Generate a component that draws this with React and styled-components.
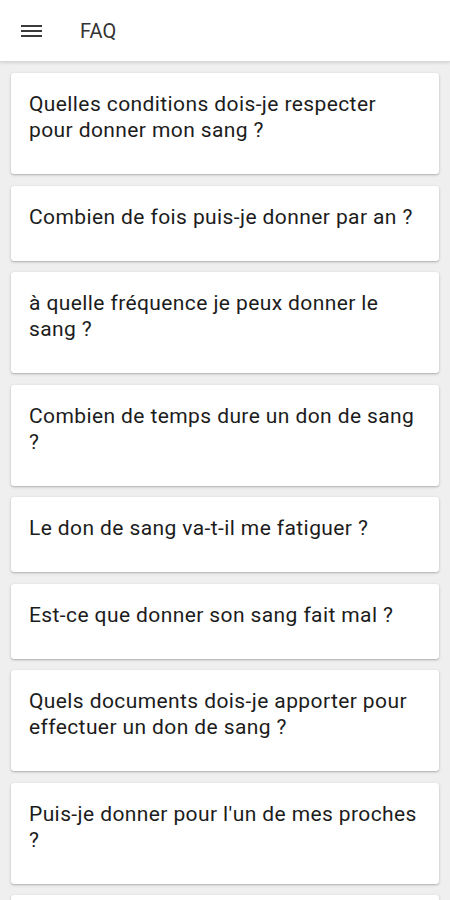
import React from "react";
import styled, { createGlobalStyle } from "styled-components";

const Global = createGlobalStyle`
  html, body { margin: 0; padding: 0; }
  body {
    background: #eeeeee;
    font-family: Roboto, "Noto Sans", Arial, sans-serif;
    -webkit-font-smoothing: antialiased;
  }
`;

const Page = styled.div`
  height: 900px;
  overflow: hidden;
  display: flex;
  flex-direction: column;
  background: #efefef;
`;

const TopBar = styled.header`
  flex: none;
  height: 62px;
  box-sizing: border-box;
  background: #ffffff;
  display: flex;
  align-items: center;
  padding-left: 21px;
  gap: 38px;
  border-bottom: 1px solid #d9d9d9;
  box-shadow: 0 1px 3px rgba(0, 0, 0, 0.12);
  position: relative;
  z-index: 1;
`;

const MenuButton = styled.div`
  width: 21px;
  height: 12px;
  display: flex;
  flex-direction: column;
  justify-content: space-between;
`;

const MenuLine = styled.span`
  display: block;
  height: 2px;
  background: #3a3a3a;
`;

const Title = styled.h1`
  margin: 0;
  font-size: 20px;
  font-weight: 400;
  color: #333333;
  letter-spacing: 0.1px;
`;

const List = styled.main`
  display: flex;
  flex-direction: column;
  gap: 11.5px;
  padding: 11px 11px 0 11px;
`;

const Card = styled.div`
  flex: none;
  background: #ffffff;
  border-radius: 3px;
  box-shadow: 0 1px 3px rgba(0, 0, 0, 0.22), 0 1px 1px rgba(0, 0, 0, 0.08);
  padding: 18px 18px 31px 18px;
  min-height: ${(p) => (p.$placeholder ? "26px" : "0")};
`;

const Question = styled.p`
  margin: 0;
  font-size: 21px;
  line-height: 26px;
  letter-spacing: 0.4px;
  color: #1c1c1c;
  font-weight: 400;
`;

const questions = [
  "Quelles conditions dois-je respecter pour donner mon sang ?",
  "Combien de fois puis-je donner par an ?",
  "à quelle fréquence je peux donner le sang ?",
  "Combien de temps dure un don de sang ?",
  "Le don de sang va-t-il me fatiguer ?",
  "Est-ce que donner son sang fait mal ?",
  "Quels documents dois-je apporter pour effectuer un don de sang ?",
  "Puis-je donner pour l'un de mes proches ?",
];

export default function App() {
  return (
    <>
      <Global />
      <Page>
        <TopBar>
          <MenuButton>
            <MenuLine />
            <MenuLine />
            <MenuLine />
          </MenuButton>
          <Title>FAQ</Title>
        </TopBar>
        <List>
          {questions.map((q) => (
            <Card key={q}>
              <Question>{q}</Question>
            </Card>
          ))}
          <Card $placeholder aria-hidden="true" />
        </List>
      </Page>
    </>
  );
}
